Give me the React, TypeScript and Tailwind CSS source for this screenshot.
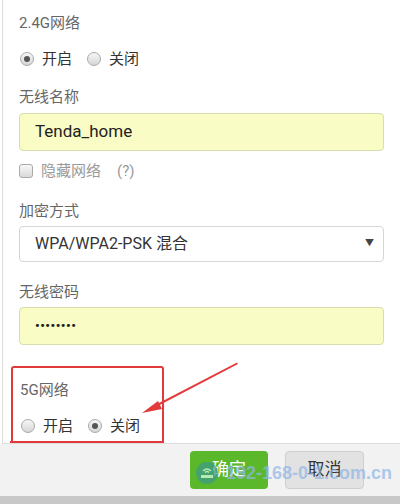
import React, { useState } from 'react';

const font = { fontFamily: 'Roboto, "Noto Sans CJK SC", sans-serif' };

const Radio: React.FC<{ checked: boolean; label: string; onClick: () => void }> = ({ checked, label, onClick }) => (
    <label className="flex items-center cursor-pointer" onClick={onClick}>
        <span className="w-[14px] h-[14px] rounded-full border border-[#aaaaaa] bg-gradient-to-b from-[#f7f7f7] to-[#d6d6d6] flex items-center justify-center">
            {checked && <span className="w-[6px] h-[6px] rounded-full bg-[#555]" />}
        </span>
        <span className="ml-[8px] text-[15px] text-[#333] leading-[20px]">{label}</span>
    </label>
);

const App: React.FC = () => {
    const [wifi24, setWifi24] = useState(true);
    const [wifi5, setWifi5] = useState(false);

    return (
        <div className="w-[400px] h-[504px] bg-white relative overflow-hidden flex flex-col" style={font}>
            <div className="flex-1 ml-[2px] border-l border-b border-[#dedede] pl-[16px] pr-[16px] flex flex-col">
                <div className="mt-[13px] text-[15px] leading-[20px] text-[#666]">2.4G网络</div>
                <div className="mt-[16px] flex items-center gap-[15px] pl-[1px]">
                    <Radio checked={wifi24} label="开启" onClick={() => setWifi24(true)} />
                    <Radio checked={!wifi24} label="关闭" onClick={() => setWifi24(false)} />
                </div>
                <div className="mt-[18px] text-[15px] leading-[20px] text-[#666]">无线名称</div>
                <div className="mt-[6px] h-[38px] w-[365px] rounded-[4px] border border-[#d9dcae] bg-[#f9fcc4] flex items-center pl-[15px] text-[17px] text-[#222]">
                    Tenda_home
                </div>
                <div className="mt-[10px] h-[20px] flex items-center text-[15px] text-[#9a9a9a]">
                    <span className="w-[14px] h-[14px] rounded-[3px] border border-[#aaaaaa] bg-gradient-to-b from-[#f7f7f7] to-[#dadada]" />
                    <span className="ml-[8px]">隐藏网络</span>
                    <span className="ml-[16px]">(?)</span>
                </div>
                <div className="mt-[20px] text-[15px] leading-[20px] text-[#666]">加密方式</div>
                <div className="mt-[5px] h-[36px] w-[365px] rounded-[4px] border border-[#d6d6d6] bg-white flex items-center justify-between pl-[15px] pr-[9px] text-[16px] text-[#333]">
                    <span>WPA/WPA2-PSK 混合</span>
                    <span className="text-[9px] text-[#444]">▼</span>
                </div>
                <div className="mt-[20px] text-[15px] leading-[20px] text-[#666]">无线密码</div>
                <div className="mt-[5px] h-[38px] w-[365px] rounded-[4px] border border-[#d9dcae] bg-[#f9fcc4] flex items-center pl-[15px] text-[13px] tracking-[0.5px] text-[#222] font-bold">
                    ••••••••
                </div>
                <div className="mt-[21px] ml-[-8px] w-[153px] flex-1 border-2 border-b-0 border-[#e23a3a] rounded-t-[3px] pl-[7px]">
                    <div className="mt-[12px] text-[15px] leading-[20px] text-[#666]">5G网络</div>
                    <div className="mt-[16px] flex items-center gap-[15px] pl-[1px]">
                        <Radio checked={wifi5} label="开启" onClick={() => setWifi5(true)} />
                        <Radio checked={!wifi5} label="关闭" onClick={() => setWifi5(false)} />
                    </div>
                </div>
            </div>
            <div className="h-[52px] bg-[#f2f2f2] flex items-center justify-end gap-[17px] pr-[36px]">
                <button className="w-[78px] h-[38px] rounded-[4px] bg-[#5bb82a] text-white text-[17px]">确定</button>
                <button className="w-[79px] h-[38px] rounded-[4px] bg-[#e2e2e2] border border-[#cfcfcf] text-[#333] text-[17px]">取消</button>
            </div>
            <div className="h-[8px] bg-[#c8c8c8]" />

            {/* red annotation: bottom edge of box */}
            <div className="absolute left-[10px] top-[441px] w-[153px] h-[2px] bg-[#e23a3a]" />

            {/* red arrow */}
            <svg className="absolute left-0 top-0 pointer-events-none" width="400" height="504">
                <polygon points="237,362.5 238,364 155,407.5 154,405.5" fill="#e33b3b" />
                <polygon points="142,413 158,401 162,409" fill="#e33b3b" />
            </svg>

            {/* watermark */}
            <div className="absolute left-[196px] top-[462px] flex items-center whitespace-nowrap pointer-events-none opacity-70">
                <span className="w-[22px] h-[22px] shrink-0 rounded-full bg-[#3a9a8c] flex items-center justify-center">
                    <svg width="14" height="12" viewBox="0 0 14 12">
                        <path d="M3 4 Q7 0 11 4" stroke="#dfe" strokeWidth="1.2" fill="none" />
                        <path d="M5 5.5 Q7 3.5 9 5.5" stroke="#dfe" strokeWidth="1.2" fill="none" />
                        <rect x="1" y="8" width="12" height="3" fill="#dfe" />
                    </svg>
                </span>
                <span className="ml-[8px] text-[18px] leading-[22px] font-bold text-[#8fb6e6]" style={{ fontFamily: '"Liberation Sans", Arial, sans-serif' }}>
                    192-168-0-1.com.cn
                </span>
            </div>
        </div>
    );
};

export default App;
